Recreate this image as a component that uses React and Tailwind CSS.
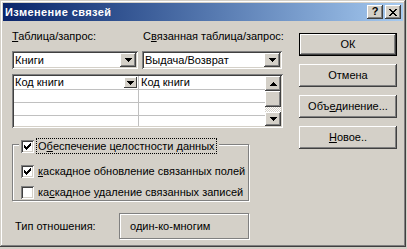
import React from "react";

const FONT = { fontFamily: "Tahoma, 'Liberation Sans', Arial, sans-serif" };

// classic win2000 bevels
const RAISED =
  "shadow-[inset_-1px_-1px_0_#404040,inset_1px_1px_0_#ffffff,inset_-2px_-2px_0_#808080,inset_2px_2px_0_#d4d0c8]";
const SUNKEN =
  "shadow-[inset_1px_1px_0_#808080,inset_-1px_-1px_0_#ffffff,inset_2px_2px_0_#404040,inset_-2px_-2px_0_#d4d0c8]";
const ETCHED = "border border-[#808080] shadow-[inset_1px_1px_0_#ffffff,1px_1px_0_#ffffff]";

function Arrow({ up = false }) {
  return (
    <svg width="7" height="4" viewBox="0 0 7 4" shapeRendering="crispEdges">
      <polygon points={up ? "3.5,0 7,4 0,4" : "0,0 7,0 3.5,4"} fill="#000" />
    </svg>
  );
}

function Combo({ value, width }) {
  return (
    <div className={`flex h-[18px] bg-white p-[2px] ${SUNKEN}`} style={{ width }}>
      <div className="flex flex-1 items-center pl-[1px] text-black">{value}</div>
      <div className={`flex h-[14px] w-[16px] items-center justify-center bg-[#d4d0c8] ${RAISED}`}>
        <Arrow />
      </div>
    </div>
  );
}

function Check({ checked }) {
  return (
    <div className={`flex h-[13px] w-[13px] shrink-0 items-center justify-center bg-white ${SUNKEN}`}>
      {checked && (
        <svg width="7" height="7" viewBox="0 0 7 7" shapeRendering="crispEdges">
          <path d="M0 2h1v1h1v1h1v-1h1v-1h1v-1h1v-1h1v3h-1v1h-1v1h-1v1h-1v1h-1v-1h-1v-1h-1v-1h-1z" fill="#000" />
        </svg>
      )}
    </div>
  );
}

function Btn({ children, isDefault }) {
  if (isDefault) {
    return (
      <div className="h-[23px] w-[98px] border border-black">
        <div className={`flex h-full w-full items-center justify-center bg-[#d4d0c8] ${RAISED}`}>{children}</div>
      </div>
    );
  }
  return (
    <div className={`flex h-[23px] w-[98px] items-center justify-center bg-[#d4d0c8] ${RAISED}`}>{children}</div>
  );
}

export default function App() {
  return (
    <div className="h-[249px] w-[407px] bg-[#d4d0c8] text-[11px] leading-[13px] text-black" style={FONT}>
      <div
        className={`flex h-[247px] w-[406px] flex-col bg-[#d4d0c8] p-[3px] shadow-[inset_-1px_-1px_0_#404040,inset_1px_1px_0_#d4d0c8,inset_-2px_-2px_0_#808080,inset_2px_2px_0_#ffffff]`}
      >
        {/* title bar */}
        <div className="flex h-[18px] items-center bg-gradient-to-r from-[#0a246a] to-[#a6caf0] pl-[2px] pr-[2px]">
          <span className="flex-1 font-bold tracking-[0.4px] text-white">Изменение связей</span>
          <div className={`flex h-[14px] w-[16px] items-center justify-center bg-[#d4d0c8] font-bold ${RAISED}`}>
            <span className="-mt-[1px]">?</span>
          </div>
          <div className={`ml-[2px] flex h-[14px] w-[16px] items-center justify-center bg-[#d4d0c8] ${RAISED}`}>
            <svg width="8" height="7" viewBox="0 0 8 7" shapeRendering="crispEdges">
              <path d="M0 0h2v1h1v1h2v-1h1v-1h2v1h-1v1h-1v1h-1v1h1v1h1v1h1v1h-2v-1h-1v-1h-2v1h-1v1h-2v-1h1v-1h1v-1h1v-1h-1v-1h-1v-1h-1z" fill="#000" />
            </svg>
          </div>
        </div>

        {/* body */}
        <div className="flex">
          <div className="ml-[9px] flex w-[271px] flex-col">
            <div className="mt-[9px] flex h-[13px] whitespace-nowrap">
              <span className="w-[131px] shrink-0">
                <u>Т</u>аблица/запрос:
              </span>
              <span>
                С<u>в</u>язанная таблица/запрос:
              </span>
            </div>

            <div className="mt-[8px] flex gap-[4px]">
              <Combo value="Книги" width={126} />
              <Combo value="Выдача/Возврат" width={140} />
            </div>

            <div className={`mt-[5px] flex h-[54px] w-[271px] bg-white p-[2px] ${SUNKEN}`}>
              <div className="flex flex-1 flex-col">
                {[14, 13, 13, 0].map((h, i) => (
                  <div
                    key={i}
                    className={`flex ${h ? "border-b border-[#c0c0c0]" : "flex-1"}`}
                    style={h ? { height: h } : undefined}
                  >
                    <div className="flex w-[125px] items-center justify-between border-r border-[#c0c0c0] pl-[1px]">
                      {i === 0 && (
                        <>
                          <span>Код книги</span>
                          <div className="mr-[1px] flex h-[11px] w-[13px] items-center justify-center bg-[#d4d0c8] shadow-[inset_-1px_-1px_0_#404040,inset_1px_1px_0_#ffffff]">
                            <Arrow />
                          </div>
                        </>
                      )}
                    </div>
                    <div className="flex flex-1 items-center pl-[2px]">{i === 0 && "Код книги"}</div>
                  </div>
                ))}
              </div>
              {/* scrollbar */}
              <div className="flex w-[16px] flex-col">
                <div className={`flex h-[15px] items-center justify-center bg-[#d4d0c8] ${RAISED}`}>
                  <Arrow up />
                </div>
                <div className={`h-[16px] bg-[#d4d0c8] ${RAISED}`} />
                <div className="flex-1 bg-[image:repeating-conic-gradient(#ffffff_0%_25%,#d4d0c8_0%_50%)] bg-[length:2px_2px]" />
                <div className={`flex h-[14px] items-center justify-center bg-[#d4d0c8] ${RAISED}`}>
                  <Arrow />
                </div>
              </div>
            </div>

            {/* group box */}
            <div className={`mt-[16px] flex h-[57px] w-[237px] flex-col whitespace-nowrap ${ETCHED}`}>
              <div className="-mt-[7px] ml-[6px] flex h-[16px] w-fit items-center bg-[#d4d0c8] px-[2px]">
                <Check checked />
                <span className="ml-[2px] flex h-[16px] items-center border border-dotted border-black px-[1px]">
                  О<u>б</u>еспечение целостности данных
                </span>
              </div>
              <div className="ml-[8px] mt-[9px] flex h-[16px] items-center">
                <Check checked />
                <span className="ml-[4px]">
                  <u>к</u>аскадное обновление связанных полей
                </span>
              </div>
              <div className="ml-[8px] mt-[5px] flex h-[16px] items-center">
                <Check />
                <span className="ml-[4px]">
                  ка<u>с</u>кадное удаление связанных записей
                </span>
              </div>
            </div>

            <div className="mt-[12px] flex h-[26px] items-center">
              <span className="w-[107px] pl-[3px]">Тип отношения:</span>
              <div className={`flex h-[26px] w-[130px] items-center pl-[10px] ${ETCHED}`}>один-ко-многим</div>
            </div>
          </div>

          {/* buttons */}
          <div className="ml-[16px] mt-[12px] flex flex-col gap-[8px]">
            <Btn isDefault>ОК</Btn>
            <Btn>Отмена</Btn>
            <Btn>
              Объ<u>е</u>динение...
            </Btn>
            <Btn>
              <u>Н</u>овое..
            </Btn>
          </div>
        </div>
      </div>
    </div>
  );
}
